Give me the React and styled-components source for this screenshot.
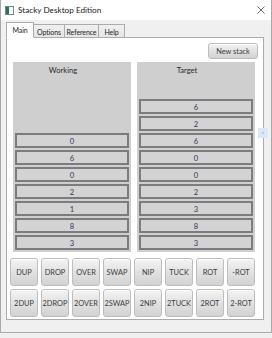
import React from 'react';
import styled, { createGlobalStyle } from 'styled-components';

const GlobalStyle = createGlobalStyle`
  html, body {
    margin: 0;
    padding: 0;
    background: #f0f0f0;
  }
  * {
    box-sizing: border-box;
  }
`;

const Window = styled.div`
  position: relative;
  width: 272px;
  height: 333px;
  display: flex;
  flex-direction: column;
  background: #f0f0f0;
  border: 1px solid #a9a9a9;
  border-top: none;
  font-family: Lato, 'Open Sans', sans-serif;
  color: #222;
`;

const TitleBar = styled.div`
  height: 20px;
  display: flex;
  align-items: center;
  padding: 0 6px 0 4px;
  background: #ffffff;
  font-size: 8.2px;
  color: #1a1a1a;
`;

const TitleText = styled.span`
  flex: 1;
  margin-left: 4px;
`;

const Body = styled.div`
  flex: 1;
  display: flex;
  flex-direction: column;
  padding: 2px 7px 0 5px;
`;

const TabStrip = styled.div`
  display: flex;
  align-items: flex-end;
  height: 16px;
  margin-bottom: -1px;
  position: relative;
  z-index: 1;
`;

const Tab = styled.div`
  display: flex;
  align-items: center;
  justify-content: center;
  width: ${({ $w }) => $w}px;
  height: ${({ $active }) => ($active ? 16 : 14)}px;
  font-size: 7px;
  letter-spacing: -0.1px;
  color: #1e1e1e;
  border: 1px solid #acacac;
  border-left: ${({ $active, $first }) => ($active || $first ? '1px solid #acacac' : 'none')};
  border-bottom: ${({ $active }) => ($active ? '1px solid #ffffff' : '1px solid #acacac')};
  background: ${({ $active }) =>
    $active ? '#ffffff' : 'linear-gradient(#f0f0f0, #e5e5e5)'};
  padding-top: ${({ $active }) => ($active ? 0 : 1)}px;
  white-space: nowrap;
`;

const TabPanel = styled.div`
  height: 283px;
  display: flex;
  flex-direction: column;
  background: #ffffff;
  border: 1px solid #acacac;
  padding: 5px 5px 2px 3px;
`;

const Toolbar = styled.div`
  display: flex;
  justify-content: flex-end;
  margin-bottom: 3px;
`;

const PushButton = styled.button`
  font-family: inherit;
  font-size: 7.4px;
  color: #3c3c3c;
  width: ${({ $w }) => $w}px;
  height: ${({ $h }) => $h}px;
  padding: 0;
  border: 1px solid #bdbdbd;
  border-radius: 3px;
  background: linear-gradient(#f4f4f4, #e3e3e3 45%, #d2d2d2);
  box-shadow: inset 0 1px 0 #ffffff;
  display: flex;
  align-items: center;
  justify-content: center;
  white-space: nowrap;
`;

const Stacks = styled.div`
  display: grid;
  grid-template-columns: 118px 118px;
  gap: 6px;
  margin: 0 2px 0 3px;
  height: 190px;
`;

const StackPanel = styled.div`
  display: flex;
  flex-direction: column;
  background: #cfcfcf;
  padding: 0 2px 2px 2px;
`;

const StackHeader = styled.div`
  font-size: 7.6px;
  color: #2a2a2a;
  text-align: center;
  padding: 3px 18px 0 0;
  height: 14px;
`;

const StackRows = styled.div`
  flex: 1;
  display: flex;
  flex-direction: column;
  justify-content: flex-end;
  gap: 2px;
`;

const Cell = styled.div`
  height: 15px;
  border: 2px solid #7c7c7c;
  background: #d3d3d3;
  display: flex;
  align-items: center;
  justify-content: center;
  font-size: 7.6px;
  color: #34385a;
`;

const Commands = styled.div`
  display: grid;
  grid-template-columns: repeat(8, 28px);
  grid-auto-rows: 28px;
  gap: 3px;
  margin-top: 6px;
`;

const Grip = styled.div`
  position: absolute;
  left: 257px;
  top: 128px;
  width: 10px;
  height: 10px;
  background: #dbe7f4;
  display: flex;
  align-items: center;
  justify-content: center;
  &::after {
    content: '';
    width: 2px;
    height: 2px;
    background: #b8cde3;
  }
`;

const AppIcon = () => (
  <svg width="9" height="9" viewBox="0 0 9 9">
    <rect x="0.5" y="0.5" width="8" height="8" fill="#ffffff" stroke="#6b8f86" />
    <rect x="1" y="1" width="3" height="7" fill="#2f6e5f" />
  </svg>
);

const CloseIcon = () => (
  <svg width="8" height="8" viewBox="0 0 8 8">
    <path d="M0.5 0.5 L7.5 7.5 M7.5 0.5 L0.5 7.5" stroke="#444" strokeWidth="0.8" />
  </svg>
);

const tabs = [
  { label: 'Main', w: 28 },
  { label: 'Options', w: 31 },
  { label: 'Reference', w: 34 },
  { label: 'Help', w: 26 },
];

const working = [0, 6, 0, 2, 1, 8, 3];
const target = [6, 2, 6, 0, 0, 2, 3, 8, 3];

const commands = [
  'DUP', 'DROP', 'OVER', 'SWAP', 'NIP', 'TUCK', 'ROT', '-ROT',
  '2DUP', '2DROP', '2OVER', '2SWAP', '2NIP', '2TUCK', '2ROT', '2-ROT',
];

const Stack = ({ title, values }) => (
  <StackPanel>
    <StackHeader>{title}</StackHeader>
    <StackRows>
      {values.map((v, i) => (
        <Cell key={i}>{v}</Cell>
      ))}
    </StackRows>
  </StackPanel>
);

const App = () => (
  <Window>
    <GlobalStyle />
    <TitleBar>
      <AppIcon />
      <TitleText>Stacky Desktop Edition</TitleText>
      <CloseIcon />
    </TitleBar>
    <Body>
      <TabStrip>
        {tabs.map((t, i) => (
          <Tab key={t.label} $w={t.w} $active={i === 0} $first={i === 0}>
            {t.label}
          </Tab>
        ))}
      </TabStrip>
      <TabPanel>
        <Toolbar>
          <PushButton $w={50} $h={16}>New stack</PushButton>
        </Toolbar>
        <Stacks>
          <Stack title="Working" values={working} />
          <Stack title="Target" values={target} />
        </Stacks>
        <Commands>
          {commands.map((c) => (
            <PushButton key={c} $w={28} $h={28}>{c}</PushButton>
          ))}
        </Commands>
      </TabPanel>
    </Body>
    <Grip />
  </Window>
);

export default App;
